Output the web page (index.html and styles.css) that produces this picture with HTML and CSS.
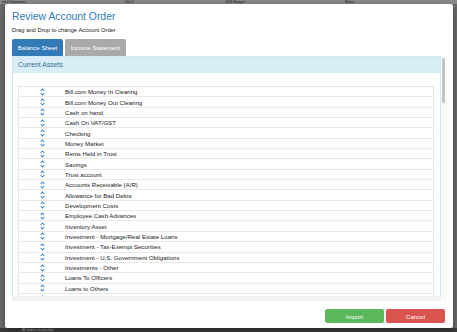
FILE: index.html
```html
<!DOCTYPE html>
<html lang="en">
<head>
<meta charset="utf-8">
<title>Review Account Order</title>
<link rel="stylesheet" href="styles.css">
</head>
<body>
<div class="page">
  <div class="page-top">
    <span class="pt-a">onal Statement</span>
    <span class="pt-b">Vdc/2</span>
    <span class="pt-c">2026 Budget</span>
    <span class="pt-d">Mana</span>
  </div>
  <div class="page-mid"></div>
  <div class="page-bottom">All debits reconciled</div>
</div>

<div class="modal">
  <h1 class="title">Review Account Order</h1>
  <p class="sub">Drag and Drop to change Account Order</p>
  <div class="tabs">
    <div class="tab active">Balance Sheet</div>
    <div class="tab">Income Statement</div>
  </div>
  <div class="scroller">
    <div class="scroll-main">
      <div class="panel">
        <div class="panel-head">Current Assets</div>
        <div class="panel-body">
          <div class="list" id="list"></div>
        </div>
      </div>
      <div class="hbar"></div>
    </div>
    <div class="vbar"><div class="thumb"></div></div>
  </div>
  <div class="footer">
    <button class="btn import">Import</button>
    <button class="btn cancel">Cancel</button>
  </div>
</div>

<script>
var names = ["Bill.com Money In Clearing","Bill.com Money Out Clearing","Cash on hand","Cash On VAT/GST","Checking","Money Market","Rents Held in Trust","Savings","Trust account","Accounts Receivable (A/R)","Allowance for Bad Debts","Development Costs","Employee Cash Advances","Inventory Asset","Investment - Mortgage/Real Estate Loans","Investment - Tax-Exempt Securities","Investment - U.S. Government Obligations","Investments - Other","Loans To Officers","Loans to Others",""];
var icon = '<svg width="5" height="8" viewBox="0 0 5 8"><path d="M0.7 3 L2.5 1 L4.3 3 M0.7 5 L2.5 7 L4.3 5" fill="none" stroke="#3a86cc" stroke-width="1.1"/></svg>';
var html = "";
for (var i = 0; i < names.length; i++) {
  html += '<div class="row"><span class="grip">' + icon + '</span><span class="name">' + names[i] + '</span></div>';
}
document.getElementById("list").innerHTML = html;
</script>
</body>
</html>
```

FILE: styles.css
```css
html, body {
  margin: 0;
  padding: 0;
}
body {
  width: 457px;
  height: 332px;
  overflow: hidden;
  background: #6f6f6f;
  font-family: "Liberation Sans", Arial, sans-serif;
  position: relative;
}
.page {
  height: 332px;
  display: flex;
  flex-direction: column;
}
.page-top {
  height: 4px;
  background: #8a8a8a;
  font-size: 3.5px;
  line-height: 4px;
  color: #222;
  white-space: nowrap;
  display: flex;
}
.pt-a { margin-left: 2px; width: 103px; }
.pt-b { margin-left: 20px; width: 100px; }
.pt-c { width: 100px; }
.pt-d { margin-left: 20px; }
.page-mid {
  flex: 1;
  background: #6b6b6b;
}
.page-bottom {
  height: 4px;
  background: #3c3c3c;
  color: #bbb;
  font-size: 3.5px;
  line-height: 4px;
  padding-left: 22px;
}

.modal {
  position: absolute;
  left: 5px;
  top: 4px;
  width: 448px;
  height: 324px;
  box-sizing: border-box;
  background: #fff;
  border-radius: 2px;
  box-shadow: 0 2px 6px rgba(0,0,0,0.4);
  padding: 5px 6px 0 7px;
  display: flex;
  flex-direction: column;
}
.title {
  margin: 0;
  font-weight: normal;
  font-size: 10.4px;
  line-height: 16px;
  color: #2e7bb8;
}
.sub {
  margin: 1px 0 0;
  font-size: 5.8px;
  line-height: 8px;
  color: #222;
}
.tabs {
  display: flex;
  margin-top: 5px;
  gap: 2px;
}
.tab {
  width: 61px;
  height: 17px;
  line-height: 17px;
  text-align: center;
  font-size: 6.1px;
  color: #fff;
  background: #a9a9a9;
  border-radius: 2px 2px 0 0;
}
.tab.active {
  width: 51px;
  background: #337ab7;
}
.scroller {
  display: flex;
  height: 245px;
}
.scroll-main {
  flex: 1;
  display: flex;
  flex-direction: column;
  overflow: hidden;
}
.panel {
  flex: 1;
  display: flex;
  flex-direction: column;
  border: 1px solid #cfe8f2;
  border-bottom: none;
  overflow: hidden;
}
.panel-head {
  height: 16px;
  line-height: 16px;
  background: #d9edf7;
  color: #31708f;
  font-size: 6.8px;
  padding-left: 5px;
}
.panel-body {
  flex: 1;
  overflow: hidden;
  padding: 13px 6px 0 5px;
}
.list {
  border-top: 1px solid #e8e8e8;
}
.row {
  height: 10.35px;
  box-sizing: border-box;
  display: flex;
  align-items: center;
  border: 1px solid #e8e8e8;
  border-top: none;
  font-size: 6.1px;
  color: #222;
}
.grip {
  width: 46px;
  display: flex;
  justify-content: center;
}
.grip svg {
  display: block;
}
.name {
  white-space: nowrap;
}
.hbar {
  height: 5px;
  background: #f1f1f1;
}
.vbar {
  width: 6px;
  background: #fafafa;
  padding-top: 2px;
  box-sizing: border-box;
}
.thumb {
  width: 3px;
  height: 45px;
  margin-left: 1px;
  background: #c3c3c3;
  border-radius: 1px;
}
.footer {
  display: flex;
  justify-content: flex-end;
  gap: 2px;
  margin-top: 8px;
  padding-right: 2px;
}
.btn {
  width: 59px;
  height: 14px;
  border: none;
  border-radius: 2px;
  color: #fff;
  font-family: "Liberation Sans", Arial, sans-serif;
  font-size: 6.1px;
  padding: 0;
}
.import {
  background: #5cb85c;
}
.cancel {
  background: #d9534f;
}
```
